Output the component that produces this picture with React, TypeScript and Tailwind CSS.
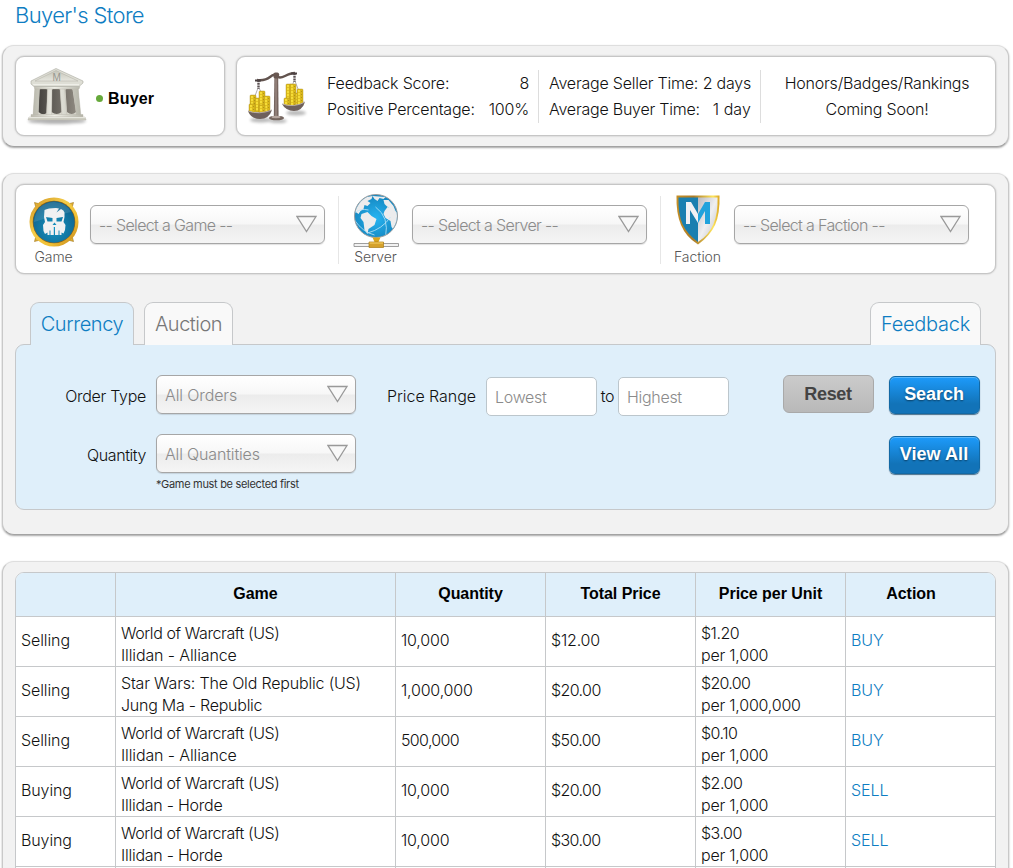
import React from "react";

const cx = (...parts: (string | undefined)[]) => parts.filter(Boolean).join(" ");

function Panel({ className, children }: { className?: string; children: React.ReactNode }) {
  return (
    <section
      className={cx(
        "ml-[2px] w-[1007px] rounded-[12px] border border-[#c9c9c9] border-t-[#dedede] border-b-[#a3a3a3] bg-[#f2f2f2] shadow-[0_1px_2px_rgba(0,0,0,0.35)]",
        className,
      )}
    >
      {children}
    </section>
  );
}

function Card({ className, children }: { className?: string; children: React.ReactNode }) {
  return (
    <div
      className={cx(
        "flex rounded-[9px] border border-[#c6c6c6] bg-white shadow-[0_0_2px_rgba(0,0,0,0.25)]",
        className,
      )}
    >
      {children}
    </div>
  );
}

function BankIcon() {
  return (
    <svg width="64" height="64" viewBox="24 64 64 64" className="block overflow-visible">
      <defs>
        <linearGradient id="stone" x1="0" x2="1">
          <stop offset="0" stopColor="#b9b8ac" />
          <stop offset=".45" stopColor="#eeeee6" />
          <stop offset="1" stopColor="#b4b4a8" />
        </linearGradient>
        <linearGradient id="roof" x1="0" y1="0" x2="0" y2="1">
          <stop offset="0" stopColor="#c5c5ba" />
          <stop offset="1" stopColor="#e6e6de" />
        </linearGradient>
        <linearGradient id="dark" x1="0" x2="1">
          <stop offset="0" stopColor="#45433f" />
          <stop offset="1" stopColor="#8d887f" />
        </linearGradient>
        <filter id="soft" x="-20%" y="-100%" width="140%" height="300%">
          <feGaussianBlur stdDeviation="1.500" />
        </filter>
      </defs>
      <ellipse cx="57" cy="121" rx="29" ry="3" fill="#000" opacity=".3" filter="url(#soft)" />
      <path d="M34.500 87H78.500L80 116H33Z" fill="#d9d8ce" />
      <path d="M39.500 89.500Q43 87.500 47.500 89.500L46.500 113Q43 116 38.500 112ZM52 89.500Q56 87.500 60 89.500L61.500 112Q57 116 51.500 112ZM65.500 89.500Q69 87.500 72.500 89.500L76 112Q72 116 67 112Z" fill="url(#dark)" />
      <g stroke="#b5b4a9" strokeWidth=".4" fill="url(#stone)">
        <path d="M35 88H39.500L38 116H33ZM47.500 88H52L51.500 116H46.500ZM60 88H64.500L67 116H62ZM73 88H78L81 116H76.500Z" />
        <path d="M34 86.500H80L79 89H35ZM31 114.500H83V117H31Z" />
      </g>
      <path d="M29 117H85L86 120H28Z" fill="#cdcdc1" stroke="#b0afa4" strokeWidth=".4" />
      <path d="M56 68.500 31 81V84L34 86.500H79L83 83V81Z" fill="#deded5" stroke="#aaa99f" strokeWidth=".6" />
      <path d="M56 70.500 35 81H78Z" fill="url(#roof)" stroke="#b0afa5" strokeWidth=".5" />
      <text x="56.500" y="81" textAnchor="middle" fontFamily="Liberation Sans" fontSize="10" fontWeight="400" fill="#97968e">M</text>
      <path d="M29 117.400H85M33 84.500H79" stroke="#f3f3ec" strokeWidth=".8" />
    </svg>
  );
}

const coins: [number, number, number][] = [
  [251, 95, 16], [256, 98, 14], [260, 91, 22], [265, 96, 16], [250, 104, 9], [260, 105, 9],
  [287, 84, 22], [291, 84, 23], [296, 93, 14], [298, 89, 17], [285, 98, 9],
];

function ScalesIcon() {
  return (
    <svg width="64" height="60" viewBox="246 68 64 60" className="block overflow-visible">
      <g opacity=".28" filter="url(#soft)">
        <ellipse cx="279" cy="121" rx="9" ry="2" />
        <ellipse cx="262" cy="120" rx="11" ry="2.500" />
        <ellipse cx="297" cy="113" rx="10" ry="2.500" />
      </g>
      <path d="M258 80Q266 81 271 77T278 76T286 76T296 73" fill="none" stroke="#62534e" strokeWidth="2.400" />
      <path d="M259.500 80V89M295.500 73V82" stroke="#5b5153" strokeWidth="2.400" strokeDasharray="2 .7" />
      <path d="M256 80.500H262M292 73.500H298" stroke="#4c4243" strokeWidth="2" />
      <path d="M259 88 251 109M260 88 270 108M295 81 286 103M296 81 304 102" fill="none" stroke="#a0999a" strokeWidth=".8" />
      <path d="M275.400 76H279.200L279.600 117H274.800Z" fill="#76655f" />
      <path d="M277 76V117" stroke="#a7968f" strokeWidth="1" />
      <rect x="274.500" y="72.500" width="5.600" height="6" rx="1.800" fill="#695852" />
      <ellipse cx="277.500" cy="118" rx="7.500" ry="2.300" fill="#75665f" />
      <ellipse cx="277" cy="117" rx="4.500" ry="1.200" fill="#b5a59e" />
      {coins.map(([x, y, h], i) => (
        <g key={i}>
          <rect x={x} y={y} width="6" height={h} rx="1" fill="#dbb91c" stroke="#a88c1a" strokeWidth=".4" />
          <path d={`M${x + 2} ${y + 1}v${h - 2}`} stroke="#f8e03c" strokeWidth="1.800" strokeDasharray="2.300 .7" />
          <path d={`M${x + 4.5} ${y + 2}v${h - 3}`} stroke="#a78b18" strokeWidth=".8" strokeDasharray="1 2" />
        </g>
      ))}
      <path d="M249 111Q260 115 273 110Q270 119 261 119T249 111ZM283 104Q295 108 306 102Q303 111 295 111T283 104Z" fill="#6e605c" />
      <path d="M249 111Q260 115 273 110M283 104Q295 108 306 102" stroke="#b5aaa6" fill="none" strokeWidth="1" />
    </svg>
  );
}

function GameIcon() {
  return (
    <svg width="50" height="50" viewBox="0 0 50 50" className="block shrink-0">
      <defs>
        <linearGradient id="gold" x1="0" y1="0" x2="1" y2="1">
          <stop offset="0" stopColor="#b98524" />
          <stop offset=".12" stopColor="#d9a32e" />
          <stop offset=".4" stopColor="#f4cc48" />
          <stop offset=".7" stopColor="#f0bf35" />
          <stop offset="1" stopColor="#b97913" />
        </linearGradient>
        <radialGradient id="sea" cx=".5" cy=".65" r=".6">
          <stop offset="0" stopColor="#1595c4" />
          <stop offset="1" stopColor="#10638d" />
        </radialGradient>
      </defs>
      <path d="M5.500 5.500 11 7 7 11ZM44.500 5.500 39 7 43 11ZM5.500 44.500 11 43 7 39ZM44.500 44.500 39 43 43 39Z" fill="#e5b537" stroke="#9c6e18" strokeWidth=".6" />
      <circle cx="25" cy="25" r="24.500" fill="url(#gold)" />
      <circle cx="25" cy="25" r="21.300" fill="#936313" />
      <circle cx="25" cy="25" r="20.700" fill="url(#sea)" />
      <path d="M5 25Q7 6 25 5Q38 6 42 15Q23 19 5 25Z" fill="#fff" opacity=".12" />
      <path
        fillRule="evenodd"
        fill="#f1f1f2"
        d="M15.500 13Q19 11 27 11L30 11.500 27.500 15.500 32 12Q35 13 35.500 15.500L35.500 20 34.500 25 36.500 28 36 33 34.500 36.500 32.500 35.500V38H30.500V33.500H29.500V38H26V30H24.800V38H21.500V33.500H20.500V38H18.500V35.500L16 37 14.500 34 14 28 16 25 15 20ZM17 20 23.500 21V24.500H18.500ZM34 20 27.500 21V24.500H32.500ZM25.500 25.500 23.500 28H27.500Z"
      />
    </svg>
  );
}

function ServerIcon() {
  return (
    <svg width="48" height="54" viewBox="-.5 0 48 54" className="block shrink-0">
      <defs>
        <radialGradient id="ocean" cx=".5" cy=".55" r=".55">
          <stop offset="0" stopColor="#26b4f2" />
          <stop offset="1" stopColor="#1586bf" />
        </radialGradient>
        <clipPath id="globe"><circle cx="23.500" cy="22" r="21" /></clipPath>
      </defs>
      <circle cx="23.500" cy="22" r="21.500" fill="url(#ocean)" stroke="#9a9da0" strokeWidth="1" />
      <g clipPath="url(#globe)" fill="#ececed">
        <path d="M2 17 6 8 14 3 20 2 19 5 15 7 18 9 15 12 12 11 11 15 8 17 6 20Z" />
        <path d="M20 2 33 3 31 5 27 4 25 7 22 5Z" />
        <path d="M9 20 15 18 19 22 24 25 22 31 16 35 15 40 12 36 11 28 8 24Z" />
        <path d="M31 6 36 6 41 12 43 17 38 15 34 12 32 10Z" />
        <path d="M32 17 35 13 41 15 46 20V30L42 37 39 33 38 27 33 24 31 20Z" />
        <g fill="none" stroke="#bfe6f8" strokeWidth=".8">
          <path d="M2 19Q8 14 16 16M23 13Q37 23 33 43M38 23Q30 35 15 39M2 26Q10 38 22 41" />
        </g>
      </g>
      <path d="M1.500 49.500H46V52.500H1.500Z" fill="#f2f2f2" stroke="#888" strokeWidth=".8" />
      <path d="M20 43.500H28L26 48H22Z" fill="#d8a51f" />
      <path d="M16.500 48H31V53.500H16.500Z" fill="#d5a22c" stroke="#a97b14" strokeWidth=".7" />
      <path d="M17 49H30.500" stroke="#f8d36b" />
    </svg>
  );
}

function FactionIcon() {
  return (
    <svg width="44" height="50" viewBox="0 0 44 50" className="block shrink-0">
      <defs>
        <linearGradient id="trim" x1="0" x2="1">
          <stop offset="0" stopColor="#c58e25" />
          <stop offset=".4" stopColor="#ab7b28" />
          <stop offset=".85" stopColor="#ffe65c" />
          <stop offset="1" stopColor="#d9a322" />
        </linearGradient>
        <linearGradient id="silver" x1="0" y1="0" x2="1" y2="1">
          <stop offset="0" stopColor="#bababf" />
          <stop offset=".5" stopColor="#efeff1" />
          <stop offset="1" stopColor="#bcbcc0" />
        </linearGradient>
      </defs>
      <path d="M.5.5H43.500Q44 19 39 30T22 49.500Q10 42 5 30T.5.5Z" fill="url(#trim)" />
      <path d="M2.500 2.500H22V47Q11 39 6.500 29T2.500 2.500Z" fill="#1a7fb0" />
      <path d="M22 2.500H41.500Q42 18 37.500 29T22 47Z" fill="url(#silver)" />
      <path d="M10 29V7H15L22 19V28L14 15V29Z" fill="#f1f1f4" />
      <path d="M22 19 29 7H34V29H29V16L22 28Z" fill="#20a2dc" />
    </svg>
  );
}

function Select({ label, className }: { label: string; className: string }) {
  return (
    <button
      className={cx(
        "flex h-[39px] items-center justify-between rounded-[6px] border border-[#a6a6a6] bg-[linear-gradient(#fff_0%,#f7f7f7_48%,#ececec_52%,#f5f5f5_100%)] pl-2 pr-[6px] shadow-[0_1px_1px_rgba(0,0,0,0.12)]",
        className,
      )}
    >
      <span className="pt-px text-[#8b8b8b]">{label}</span>
      <svg width="22" height="18" viewBox="0 0 22 18" className="mb-px">
        <path d="M1 1.500H20L10.500 16.500Z" fill="#f8f8f8" stroke="#999" strokeWidth="1.300" />
      </svg>
    </button>
  );
}

function Filter({ icon, name, label, className }: { icon: React.ReactNode; name: string; label: string; className: string }) {
  return (
    <div className={cx("mt-[11px] flex h-[68px]", className)}>
      <div className="flex w-[48px] flex-col items-center">
        <div className="flex h-[53px] shrink-0 items-start justify-center">{icon}</div>
        <span className="mt-[-2px] pr-px text-[14px] leading-[20px] tracking-[-0.05px] text-[#555]">{name}</span>
      </div>
      <Select label={label} className="ml-[12px] mt-[9px] w-[235px] tracking-[-0.65px]" />
    </div>
  );
}

function Tab({ label, className }: { label: string; className: string }) {
  return (
    <div
      className={cx(
        "flex h-[43px] items-center justify-center rounded-t-[9px] border border-b-0 border-[#c6c8ca] text-[20px]",
        className,
      )}
    >
      {label}
    </div>
  );
}

const blueButton =
  "flex h-[38px] w-[91px] items-center justify-center rounded-[6px] border border-[#1269a5] bg-[linear-gradient(#1d9bfb,#1273b8_75%)] text-[18px] font-bold text-white shadow-[0_1px_1px_#4b6f8a,inset_0_1px_0_#59b6fa] [font-family:'Liberation_Sans',sans-serif] [text-shadow:0_1px_2px_rgba(0,0,0,0.5)] pb-[2px] pr-px";

const input =
  "h-[39px] w-[111px] rounded-[5px] border border-[#bcc6cc] bg-white pl-2 pt-px placeholder:text-[#8b8b8b] placeholder:opacity-100";

const rows = [
  ["Selling", "World of Warcraft (US)", "Illidan - Alliance", "10,000", "$12.00", "$1.20", "per 1,000", "BUY"],
  ["Selling", "Star Wars: The Old Republic (US)", "Jung Ma - Republic", "1,000,000", "$20.00", "$20.00", "per 1,000,000", "BUY"],
  ["Selling", "World of Warcraft (US)", "Illidan - Alliance", "500,000", "$50.00", "$0.10", "per 1,000", "BUY"],
  ["Buying", "World of Warcraft (US)", "Illidan - Horde", "10,000", "$20.00", "$2.00", "per 1,000", "SELL"],
  ["Buying", "World of Warcraft (US)", "Illidan - Horde", "10,000", "$30.00", "$3.00", "per 1,000", "SELL"],
  ["", "", "", "", "", "", "", ""],
];

const columns = "grid grid-cols-[100px_280px_150px_150px_150px_149px]";

export default function App() {
  return (
    <main className="h-[868px] w-[1013px] overflow-hidden bg-white text-[16px] font-light leading-[22px] tracking-[-0.3px] text-[#111] [font-family:Inter,sans-serif]">
      <h1 className="h-[45px] pl-[15px] pt-px text-[22px] leading-[28px] tracking-[-0.64px] text-[#0e7dc2]">Buyer's Store</h1>

      <Panel className="flex h-[102px] gap-[11px] pl-[12px] pt-[10px]">
        <Card className="h-[80px] w-[210px] items-center pl-[8px]">
          <BankIcon />
          <span className="ml-[8px] mt-[4px] size-[7px] rounded-full bg-[#66a93b]" />
          <span className="ml-[5px] mt-[5px] font-bold tracking-[0.15px] text-black [font-family:'Liberation_Sans',sans-serif]">Buyer</span>
        </Card>
        <Card className="h-[80px] w-[760px] pl-[8px] pt-[11px]">
          <ScalesIcon />
          <div className="ml-[18px] mt-[2px] h-[53px] w-[212px] border-r border-[#ddd] pr-[9px] leading-[26px] tracking-[-0.2px]">
            <div className="flex justify-between"><span>Feedback Score:</span><span>8</span></div>
            <div className="flex justify-between"><span>Positive Percentage:</span><span>100%</span></div>
          </div>
          <div className="mt-[2px] h-[53px] w-[222px] border-r border-[#ddd] pl-[10px] pr-[9px] leading-[26px] tracking-[-0.22px]">
            <div className="flex justify-between"><span>Average Seller Time:</span><span>2 days</span></div>
            <div className="flex justify-between"><span>Average Buyer Time:</span><span className="tracking-[0.1px]">1 day</span></div>
          </div>
          <div className="mt-[2px] w-[232px] text-center leading-[26px] tracking-[-0.2px]">
            <div>Honors/Badges/Rankings</div>
            <div>Coming Soon!</div>
          </div>
        </Card>
      </Panel>

      <Panel className="mt-[26px] h-[362px] pl-[12px] pt-[10px]">
        <Card className="h-[90px] w-[981px]">
          <Filter icon={<div className="pt-px"><GameIcon /></div>} name="Game" label="-- Select a Game --" className="w-[323px] border-r border-[#e6e6e6] pl-[14px]" />
          <Filter icon={<div className="mt-[-2px]"><ServerIcon /></div>} name="Server" label="-- Select a Server --" className="w-[322px] border-r border-[#e6e6e6] pl-[13px]" />
          <Filter icon={<div className="mt-[-1px] pr-px"><FactionIcon /></div>} name="Faction" label="-- Select a Faction --" className="w-[322px] pl-[13px]" />
        </Card>
        <div className="mt-[28px] flex pl-[15px] pr-[27px]">
          <Tab label="Currency" className="relative z-10 w-[104px] bg-[#dfeffa] tracking-[-0.4px] text-[#0e7dc2]" />
          <Tab label="Auction" className="ml-[10px] h-[42px] w-[89px] bg-[#f9f9f9] tracking-[-0.5px] text-[#777]" />
          <Tab label="Feedback" className="ml-auto h-[42px] w-[111px] bg-[#f9f9f9] tracking-[-0.25px] text-[#0e7dc2]" />
        </div>
        <div className="mt-[-1px] flex h-[166px] w-[981px] rounded-[9px] border border-[#c6c8ca] bg-[#dfeffa] pt-[30px]">
          <div className="w-[340px]">
            <div className="flex">
              <label className="w-[130px] pt-[10px] text-right">Order Type</label>
              <Select label="All Orders" className="ml-[10px] w-[200px] tracking-[-0.12px]" />
            </div>
            <div className="mt-[20px] flex">
              <label className="w-[130px] pt-[10px] text-right tracking-[-0.42px]">Quantity</label>
              <Select label="All Quantities" className="ml-[10px] w-[200px] tracking-[-0.16px]" />
            </div>
            <p className="ml-[140px] mt-[3px] text-[11px] font-normal leading-[16px] tracking-[-0.31px] text-[#333]">*Game must be selected first</p>
          </div>
          <div className="ml-[31px] flex">
            <label className="w-[99px] pt-[10px] tracking-[-0.05px]">Price Range</label>
            <input className={cx(input, "mt-[2px]")} placeholder="Lowest" />
            <span className="w-[21px] pt-[10px] text-center">to</span>
            <input className={cx(input, "mt-[2px]")} placeholder="Highest" />
          </div>
          <div className="ml-auto mr-[15px] flex gap-[15px]">
            <button className="flex h-[38px] w-[91px] items-center justify-center rounded-[6px] border border-[#a9a9a9] bg-[linear-gradient(#cbcbcb,#b9b9b9)] pr-px text-[18px] font-bold text-[#444] [font-family:'Liberation_Sans',sans-serif]">Reset</button>
            <div className="flex flex-col gap-[22px] pt-px">
              <button className={cx(blueButton, "tracking-[-0.05px]")}>Search</button>
              <button className={cx(blueButton, "tracking-[0.05px]")}>View All</button>
            </div>
          </div>
        </div>
      </Panel>

      <Panel className="mt-[26px] h-[330px] pl-[12px] pt-[10px]">
        <div className="w-[981px] overflow-hidden rounded-t-[9px] border border-[#c6c8ca] bg-white">
          <div className={cx(columns, "h-[43px] bg-[#dfeffa] text-center font-bold tracking-[-0.05px] text-black [font-family:'Liberation_Sans',sans-serif]")}>
            {["", "Game", "Quantity", "Total Price", "Price per Unit", "Action"].map((h, i) => (
              <div key={i} className={i < 5 ? "border-r border-[#c6c8ca] pt-[10px]" : "pr-[19px] pt-[10px]"}>{h}</div>
            ))}
          </div>
          {rows.map((r, i) => (
            <div key={i} className={cx(columns, "h-[50px] border-t border-[#c6c8ca] [&>div]:border-[#c6c8ca] [&>div]:pl-[5px]")}>
              <div className="border-r pt-[12px] tracking-[-0.1px]">{r[0]}</div>
              <div className="border-r pt-[5px]">
                <div className={r[1].startsWith("Star") ? "tracking-[-0.18px]" : "tracking-[-0.4px]"}>{r[1]}</div>
                <div className={r[2].endsWith("Alliance") ? "tracking-[-0.12px]" : "tracking-[-0.25px]"}>{r[2]}</div>
              </div>
              <div className={cx("border-r pt-[12px]", r[3] === "500,000" ? "tracking-[-0.65px]" : "tracking-[-0.2px]")}>{r[3]}</div>
              <div className={cx("border-r pt-[12px]", r[4] === "$12.00" ? "tracking-[-0.2px]" : "tracking-[-0.6px]")}>{r[4]}</div>
              <div className="border-r pt-[5px]">
                <div className={r[5] === "$20.00" ? "tracking-[-0.7px]" : "tracking-[-0.5px]"}>{r[5]}</div>
                <div className="tracking-[-0.22px]">{r[6]}</div>
              </div>
              <div className="pt-[12px] tracking-[-0.05px] text-[#0e7dc2]">{r[7]}</div>
            </div>
          ))}
        </div>
      </Panel>
    </main>
  );
}
